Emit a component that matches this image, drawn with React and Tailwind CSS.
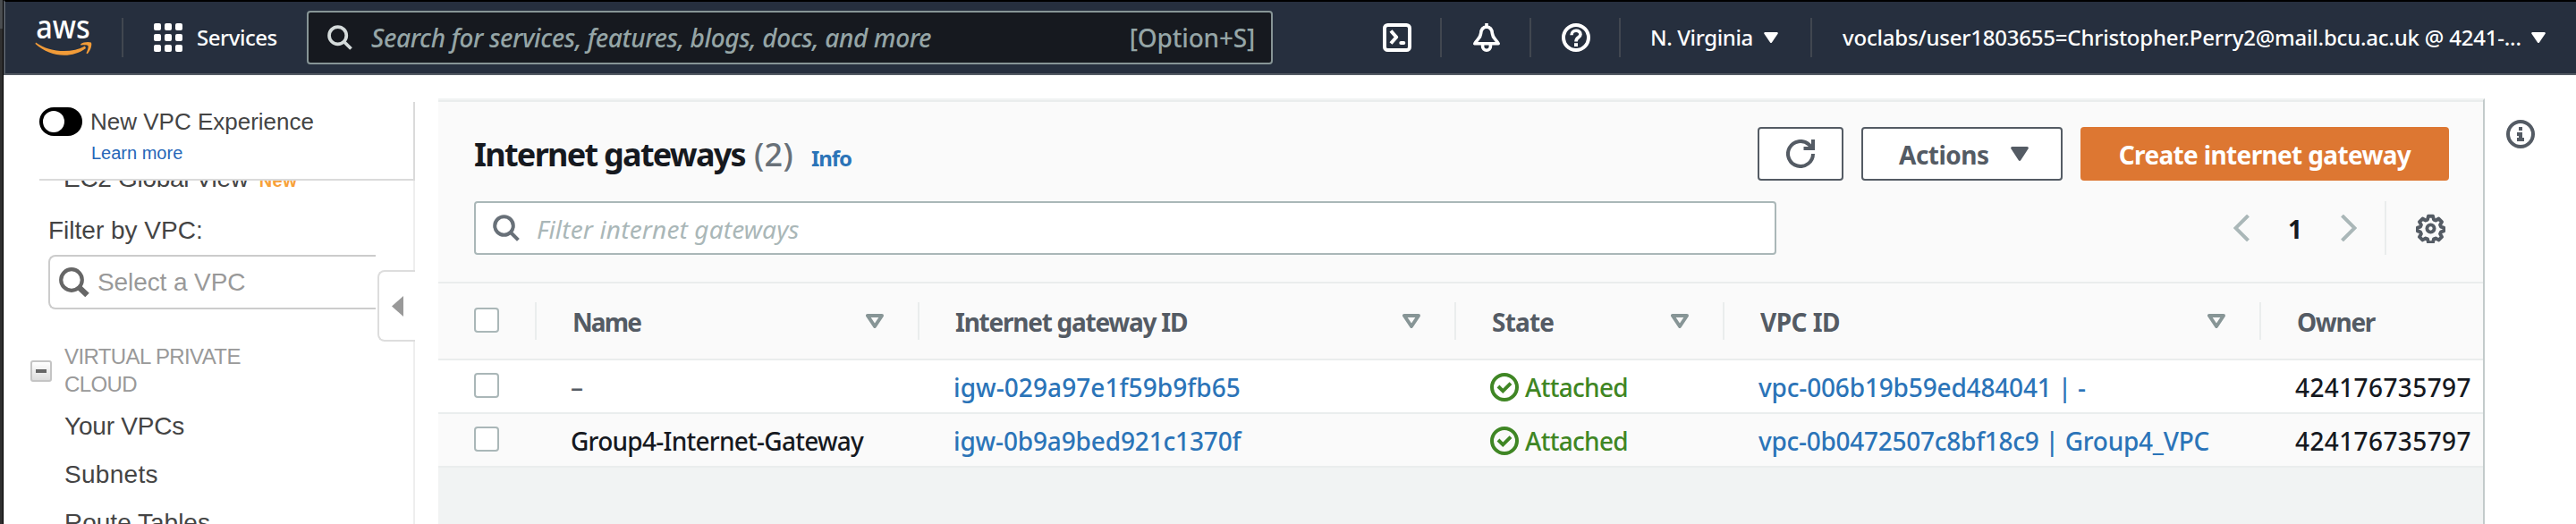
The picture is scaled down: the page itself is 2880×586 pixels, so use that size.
import React from "react";

const SANS = "font-['Noto_Sans','Open_Sans',sans-serif]";
const HELV = "font-['Liberation_Sans',Arial,sans-serif]";

function AwsLogo() {
  return (
    <svg className="h-10 w-16 shrink-0 overflow-visible" viewBox="0 0 64 40" aria-label="aws">
      <text x="1.2" y="20.5" fontFamily="Noto Sans" fontSize="37" fontWeight="500" fill="#fff" textLength="60.5" lengthAdjust="spacingAndGlyphs">aws</text>
      <path d="M1 25.5 C17 37 41 38 56 29.5 L57 32 C41 44 17 42 .5 27 Z" fill="#f19b38" />
      <path d="M51 27.5 C54 25 60 24.5 62.8 25.6 C64.3 27.5 62.5 34.5 58.8 38.2 L57.4 37.6 C59 34 60.2 30.5 59.4 29 C58.3 27.8 54.5 28.2 51.4 28.6 Z" fill="#f19b38" />
    </svg>
  );
}

function Grid9() {
  return (
    <div className="grid h-8 w-8 shrink-0 grid-cols-3 gap-1">
      {Array.from({ length: 9 }, (_, i) => <div key={i} className="rounded-[2px] bg-white" />)}
    </div>
  );
}

function Search({ className, width = 4 }) {
  return (
    <svg className={className} viewBox="0 0 30 30" fill="none" stroke="currentColor" strokeWidth={width}>
      <circle cx="12.5" cy="12.5" r="10.3" />
      <path d="M19.5 19.5L28.4 28.4" />
    </svg>
  );
}

function Terminal() {
  return (
    <svg className="ml-[123px] size-8 shrink-0" viewBox="0 0 32 32" fill="none" stroke="#fff" strokeWidth="4">
      <rect x="2" y="2" width="28" height="28" rx="3.5" />
      <path d="M9 8.5L15.2 15.5L9 22.5" strokeLinejoin="round" />
      <path d="M20.3 22H23.3" strokeLinecap="round" />
    </svg>
  );
}

function Bell() {
  return (
    <svg className="ml-[34px] size-8 shrink-0" viewBox="0 0 32 32" fill="none" stroke="#fff" strokeWidth="3.6" strokeLinejoin="round">
      <path d="M16 0V4" />
      <path d="M16 4C11 4.4 9.8 8 9.6 11.5C9.2 16.5 5.5 18 2.8 22.8H29.2C26.5 18 22.8 16.5 22.4 11.5C22.2 8 21 4.4 16 4Z" />
      <path d="M11.6 24V26A4.4 4.2 0 0 0 20.4 26V24" />
    </svg>
  );
}

function Help() {
  return (
    <svg className="ml-[34px] size-8 shrink-0" viewBox="0 0 32 32" fill="none" stroke="#fff" strokeWidth="4">
      <circle cx="16" cy="16" r="14" />
      <path d="M11 13.2C11 6.8 21 6.8 21 12.4C21 16 16 15.6 16 20.4" strokeWidth="3.6" />
      <rect x="14" y="22.2" width="4" height="3.8" fill="#fff" stroke="none" />
    </svg>
  );
}

function Caret({ className }) {
  return (
    <svg className={className} viewBox="0 0 20 16" preserveAspectRatio="none" fill="currentColor">
      <path d="M1.6 0H18.4Q20.6 .6 19.5 2.4L11.2 15.2Q10 16.6 8.8 15.2L.5 2.4Q-.6 .6 1.6 0Z" />
    </svg>
  );
}

function SortCaret() {
  return (
    <svg className="h-4 w-5 shrink-0 text-[#879596]" viewBox="0 0 20 16" fill="none" stroke="currentColor" strokeWidth="4" strokeLinejoin="round">
      <path d="M2 2H18L10 14Z" />
    </svg>
  );
}

function Refresh() {
  return (
    <svg className="size-8" viewBox="0 0 32 32" fill="none" stroke="currentColor" strokeWidth="4">
      <path d="M30 16A14 14 0 1 1 25.5 5.7L29 10" />
      <path d="M30 0V10H19.5" />
    </svg>
  );
}

function Gear() {
  return (
    <svg className="ml-[33px] size-[33px] shrink-0 text-[#545b64]" viewBox="0 0 34 34" fill="none" stroke="currentColor" strokeWidth="4" strokeLinejoin="round">
      <path d="M14.4 2.9h5.2l1 3.9 2.2.9 3.5-2 3.6 3.6-2 3.5.9 2.2 3.3 1v4l-3.3 1-.9 2.2 2 3.5-3.6 3.6-3.5-2-2.2.9-1 3.9h-5.2l-1-3.9-2.2-.9-3.5 2-3.6-3.6 2-3.5-.9-2.2-3.3-1v-4l3.3-1 .9-2.2-2-3.5 3.6-3.6 3.5 2 2.2-.9z" />
      <circle cx="17" cy="17" r="4.2" />
    </svg>
  );
}

function InfoIcon() {
  return (
    <svg className="ml-6 mt-[50px] size-8 shrink-0" viewBox="0 0 32 32" fill="#545b64">
      <circle cx="16" cy="16" r="14" fill="none" stroke="#545b64" strokeWidth="4" />
      <path d="M14 8h4v4h-4zM12 14h6v6h2v4h-8v-4h2v-2h-2z" />
    </svg>
  );
}

function CheckCircle() {
  return (
    <svg className="size-8 shrink-0" viewBox="0 0 32 32" fill="none" stroke="#3f8624" strokeWidth="4">
      <circle cx="16" cy="16" r="14" />
      <path d="M9 15L14.3 20.3L23 11.7" />
    </svg>
  );
}

function Checkbox() {
  return <div className="-mt-0.5 ml-10 size-7 rounded-[4px] border-2 border-[#aab7b8] bg-white" />;
}

const Divider = ({ className }) => <div className={`${className} h-11 w-0.5 shrink-0 bg-[#414750]`} />;

function TopBar() {
  return (
    <header className="flex h-[84px] shrink-0 items-center border-t-2 border-b-2 border-l-2 border-t-black border-b-[#545b64] border-l-[#545b64] bg-[#262f3e] text-white">
      <div className="ml-[33px] flex shrink-0"><AwsLogo /></div>
      <Divider className="ml-[33px]" />
      <div className="ml-[34px] flex shrink-0"><Grid9 /></div>
      <span className="ml-[15px] w-[124px] shrink-0 pl-px text-2xl font-medium tracking-[-0.47px]">Services</span>
      <div className="flex h-[60px] w-[1080px] shrink-0 items-center rounded-[4px] border-2 border-[#879596] bg-[#16191f] pr-[18px] pl-[21px] text-[28px] font-medium text-[#95a5a6]">
        <Search className="size-[28px] shrink-0 text-[#d5dbdb]" />
        <span className="ml-[21px] grow whitespace-nowrap italic tracking-[-0.39px]">Search for services, features, blogs, docs, and more</span>
        <span className="tracking-[-0.2px]">[Option+S]</span>
      </div>
      <Terminal />
      <Divider className="ml-8" />
      <Bell />
      <Divider className="ml-8" />
      <Help />
      <Divider className="ml-8" />
      <span className="ml-[33px] w-[127px] shrink-0 text-2xl font-medium whitespace-nowrap tracking-[-0.39px]">N. Virginia</span>
      <Caret className="h-3 w-4 shrink-0" />
      <Divider className="ml-9" />
      <span className="ml-[34px] w-[770px] shrink-0 text-2xl font-medium whitespace-nowrap tracking-[-0.21px]">voclabs/user1803655=Christopher.Perry2@mail.bcu.ac.uk @ 4241-...</span>
      <Caret className="h-3 w-4 shrink-0" />
    </header>
  );
}

function Sidebar() {
  return (
    <aside className={`${HELV} relative flex w-[460px] shrink-0 flex-col pt-[30px] text-[#444]`}>
      <div className="ml-10 h-[88px] shrink-0 border-r-2 border-b-2 border-[#dadada]">
        <div className="flex items-center pt-1.5">
          <div className="flex h-8 w-12 items-center rounded-full bg-black pl-1">
            <div className="size-6 rounded-full bg-white" />
          </div>
          <span className="ml-[9px] text-[26px] leading-8">New VPC Experience</span>
        </div>
        <div className="mt-[7px] ml-[58px] text-xl leading-6 text-[#2566b8]">Learn more</div>
      </div>
      <div className="flex grow flex-col overflow-hidden border-r-2 border-[#eee] text-[28px]">
        <div className="-mt-[18px] ml-[67px] leading-8 whitespace-nowrap tracking-[-0.3px]">
          EC2 Global View
          <span className="ml-3 text-xl font-bold tracking-[0.5px] text-[#f7a13a]">New</span>
        </div>
        <div className="mt-[26px] ml-[50px] leading-8">Filter by VPC:</div>
        <div className="mt-[11px] ml-[50px] flex h-[61px] w-[366px] shrink-0 items-center rounded-l-[8px] border-2 border-r-0 border-[#ccc] pl-2.5 text-[#999]">
          <svg className="size-[34px]" viewBox="0 0 34 34" fill="none" stroke="#666">
            <circle cx="14" cy="14" r="11.8" strokeWidth="4.2" />
            <path d="M23 23L31.5 31" strokeWidth="6.5" />
          </svg>
          <span className="ml-[9px] pt-px leading-8 tracking-[-0.1px]">Select a VPC</span>
        </div>
        <div className="mt-[37px] flex items-center">
          <div className="mt-0.5 ml-[30px] flex size-6 items-center justify-center rounded-[3px] border-2 border-[#c4c4c4] bg-gradient-to-b from-white to-[#ddd]">
            <div className="h-1 w-3 bg-[#666]" />
          </div>
          <div className="ml-3.5 w-[220px] text-2xl leading-[31px] tracking-[-0.6px] text-[#999]">VIRTUAL PRIVATE CLOUD</div>
        </div>
        <div className="mt-[5px] ml-[68px] leading-[54px]">
          <div className="tracking-[-0.2px]">Your VPCs</div>
          <div className="tracking-[0.3px]">Subnets</div>
          <div>Route Tables</div>
        </div>
      </div>
      <div className="absolute top-[218px] right-0 flex h-20 w-[42px] items-center rounded-l-[8px] border-2 border-r-0 border-[#ddd] bg-white pl-3.5">
        <svg className="h-[23px] w-[13px]" viewBox="0 0 13 23" fill="#999"><path d="M13 0V23L0 11.5Z" /></svg>
      </div>
    </aside>
  );
}

const COLS = "grid grid-cols-[108px_428px_600px_300px_600px_250px]";

function HeadCell({ children, className = "", sortable = true }) {
  return (
    <div className="flex h-[42px] items-center border-l-2 border-[#eaeded] pr-[38px] pl-10">
      <span className={`grow pt-px whitespace-nowrap ${className}`}>{children}</span>
      {sortable && <SortCaret />}
    </div>
  );
}

const ROWS = [
  { name: "–", id: "igw-029a97e1f59b9fb65", idTrack: "tracking-[0.07px]", vpc: "vpc-006b19b59ed484041 | -", vpcTrack: "tracking-[-0.17px]", nameCls: "text-[#545b64]", bg: "bg-white" },
  { name: "Group4-Internet-Gateway", id: "igw-0b9a9bed921c1370f", idTrack: "tracking-[-0.15px]", vpc: "vpc-0b0472507c8bf18c9 | Group4_VPC", vpcTrack: "tracking-[-0.27px]", nameCls: "text-[#16191f] tracking-[-0.74px]", bg: "bg-[#fafafa]" },
];

function Panel() {
  return (
    <main className="mt-[26px] ml-[26px] flex w-[2288px] shrink-0 flex-col overflow-hidden border-t-2 border-r-2 border-t-[#f1f3f3] border-r-[#c3cbcb] bg-[#f1f3f3]">
      <div className="border-t-2 border-b-2 border-[#eaeded] bg-[#fafafa] pt-7 pr-[38px] pb-[30px] pl-10">
        <div className="flex h-[60px] items-center">
          <div className="flex grow items-baseline pt-[5px] whitespace-nowrap">
            <h1 className="w-[313px] text-4xl leading-[60px] font-bold tracking-[-1.72px] text-[#16191f]">Internet gateways</h1>
            <span className="w-[64px] text-4xl leading-[60px] font-medium tracking-[0.3px] text-[#687078]">(2)</span>
            <a className="text-2xl leading-[60px] font-bold tracking-[-1.07px] text-[#2b74b8]">Info</a>
          </div>
          <div className="flex gap-5 text-[28px] font-bold text-[#545b64]">
            <button className="flex h-[60px] w-24 items-center justify-center rounded-[4px] border-2 border-[#545b64] bg-white"><Refresh /></button>
            <button className="flex h-[60px] w-[225px] items-center rounded-[4px] border-2 border-[#545b64] bg-white pl-10">
              <span className="w-[125px] pt-px text-left tracking-[-0.5px]">Actions</span>
              <Caret className="h-4 w-5" />
            </button>
            <button className="h-[60px] w-[412px] rounded-[4px] bg-[#dd7732] pt-px tracking-[-0.65px] text-white">Create internet gateway</button>
          </div>
        </div>
        <div className="mt-[23px] flex h-[60px] items-center">
          <div className="flex h-[60px] w-[1456px] shrink-0 items-center rounded-[4px] border-2 border-[#aab7b8] bg-white pl-[19px]">
            <Search className="size-[30px] text-[#687078]" />
            <span className="ml-[19px] pt-px text-[28px] italic tracking-[0.14px] text-[#aab7b8]">Filter internet gateways</span>
          </div>
          <svg className="ml-[511px] h-[30px] w-[18px] shrink-0" viewBox="0 0 18 30" fill="none" stroke="#aab7b8" strokeWidth="4"><path d="M16.5 1L2.5 15L16.5 29" /></svg>
          <span className="w-[102px] shrink-0 pt-px text-center text-[28px] font-bold text-[#16191f]">1</span>
          <svg className="h-[30px] w-[18px] shrink-0" viewBox="0 0 18 30" fill="none" stroke="#aab7b8" strokeWidth="4"><path d="M1.5 1L15.5 15L1.5 29" /></svg>
          <div className="ml-[31px] h-[60px] w-0.5 shrink-0 bg-[#eaeded]" />
          <Gear />
        </div>
      </div>

      <div className={`${COLS} h-[86px] items-center border-b-2 border-[#eaeded] bg-[#fafafa] text-[28px] font-bold text-[#545b64]`}>
        <Checkbox />
        <HeadCell className="tracking-[-1.9px]">Name</HeadCell>
        <HeadCell className="tracking-[-1.25px]">Internet gateway ID</HeadCell>
        <HeadCell className="tracking-[-0.8px]">State</HeadCell>
        <HeadCell className="tracking-[-0.54px]">VPC ID</HeadCell>
        <HeadCell className="tracking-[-1.3px]" sortable={false}>Owner</HeadCell>
      </div>

      {ROWS.map((r) => (
        <div key={r.id} className={`${COLS} h-[60px] items-center border-b-2 border-[#eaeded] ${r.bg} text-[28px] leading-[42px] font-medium whitespace-nowrap text-[#2b74b8]`}>
          <Checkbox />
          <div className={`pt-0.5 pl-10 ${r.nameCls}`}>{r.name}</div>
          <div className={`pt-0.5 pl-10 ${r.idTrack}`}>{r.id}</div>
          <div className="flex items-center gap-[7px] pt-0.5 pl-10 tracking-[-0.7px] text-[#3f8624]">
            <CheckCircle />
            <span>Attached</span>
          </div>
          <div className={`pt-0.5 pl-10 ${r.vpcTrack}`}>{r.vpc}</div>
          <div className="pt-0.5 pl-10 tracking-[0.39px] text-[#16191f]">424176735797</div>
        </div>
      ))}
    </main>
  );
}

export default function App() {
  return (
    <div className={`${SANS} flex h-[586px] w-[2880px] overflow-hidden bg-white`}>
      <div className="flex w-1 shrink-0 flex-col border-r border-black bg-[#2f2f2f]">
        <div className="h-8 bg-[#4a4d50]" />
      </div>
      <div className="flex min-w-0 grow flex-col">
        <TopBar />
        <div className="flex min-h-0 grow">
          <Sidebar />
          <Panel />
          <InfoIcon />
        </div>
      </div>
    </div>
  );
}
